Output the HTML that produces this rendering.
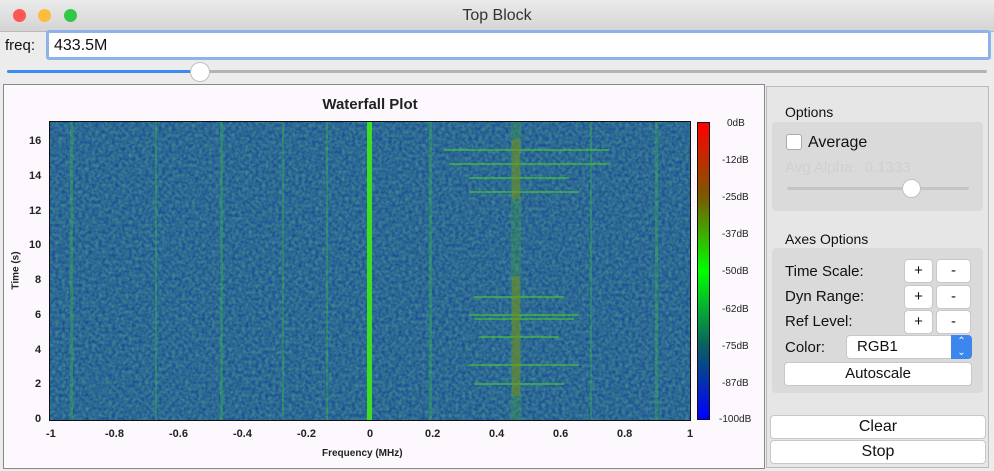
<!DOCTYPE html>
<html><head><meta charset="utf-8"><style>
*{margin:0;padding:0;box-sizing:border-box}
body{width:994px;height:471px;background:#ececec;font-family:"Liberation Sans",sans-serif;position:relative;overflow:hidden}
.a{position:absolute}
.btn{position:absolute;background:#fff;border:1px solid #c8c8c8;border-radius:4px;text-align:center;font-size:15px;color:#111}
.lbl{position:absolute;font-size:15px;color:#111}
.t{position:absolute;font-size:11px;font-weight:bold;color:#222}
</style></head><body>
<div class="a" style="left:0;top:0;width:994px;height:32px;background:linear-gradient(#ebebeb,#d4d4d4);border-bottom:1px solid #b8b8b8"></div>
<div class="a" style="left:13px;top:9px;width:13px;height:13px;border-radius:50%;background:#fc5753"></div>
<div class="a" style="left:38px;top:9px;width:13px;height:13px;border-radius:50%;background:#fdbc40"></div>
<div class="a" style="left:64px;top:9px;width:13px;height:13px;border-radius:50%;background:#33c748"></div>
<div class="a" style="left:0;top:7px;width:994px;text-align:center;font-size:16px;color:#333">Top Block</div>
<div class="lbl" style="left:5px;top:37px">freq:</div>
<div class="a" style="left:46px;top:30px;width:945px;height:30px;border:3px solid #8db4ea;border-radius:3px;background:#fff"></div>
<div class="lbl" style="left:54px;top:37px;font-size:16px">433.5M</div>
<div class="a" style="left:7px;top:70px;width:193px;height:3px;background:#3b8bf0;border-radius:2px"></div>
<div class="a" style="left:200px;top:70px;width:787px;height:3px;background:#b3b3b3;border-radius:2px"></div>
<div class="a" style="left:190px;top:62px;width:20px;height:20px;border-radius:50%;background:#fff;border:1px solid #c0c0c0"></div>
<div class="a" style="left:3px;top:84px;width:762px;height:385px;background:#fcf8fd;border:1px solid #888"></div>
<div class="a" style="left:0;top:96px;width:740px;text-align:center;font-size:15px;font-weight:bold;color:#222">Waterfall Plot</div>
<svg class="a" style="left:49px;top:121px" width="642" height="300">
<defs><filter id="n"><feTurbulence type="fractalNoise" baseFrequency="0.3" numOctaves="2" seed="3"/><feColorMatrix values="0 0 0 0 0.1  0 0 0 0 0.45  0 0 0 0 0.25  0 0 0 -1.2 1.0"/></filter></defs>
<rect x="1" y="1" width="640" height="298" fill="#1a4a98"/>
<rect x="1" y="1" width="640" height="298" filter="url(#n)" opacity="0.75"/>
<g fill="#3ac040" opacity="0.35">
<rect x="21" y="1" width="3" height="298"/><rect x="106" y="1" width="2" height="298"/><rect x="171" y="1" width="3" height="298"/><rect x="233" y="1" width="2" height="298"/><rect x="277" y="1" width="2" height="298"/><rect x="380" y="1" width="3" height="298"/><rect x="541" y="1" width="2" height="298"/><rect x="606" y="1" width="3" height="298"/>
</g>
<rect x="318" y="1" width="5" height="298" fill="#3de020"/>
<rect x="462" y="1" width="10" height="298" fill="#3ea040" opacity="0.35"/>
<g fill="#48c830" opacity="0.6">
<rect x="395" y="28" width="165" height="2"/><rect x="400" y="42" width="160" height="2"/><rect x="420" y="56" width="100" height="2"/><rect x="420" y="70" width="110" height="2"/>
<rect x="425" y="175" width="90" height="2"/><rect x="420" y="193" width="110" height="2"/><rect x="425" y="197" width="100" height="2"/><rect x="430" y="215" width="80" height="2"/><rect x="420" y="243" width="110" height="2"/><rect x="425" y="262" width="90" height="2"/>
</g>
<g fill="#7a8a20" opacity="0.5"><rect x="463" y="18" width="8" height="60"/><rect x="463" y="155" width="8" height="120"/></g>
<rect x="0.5" y="0.5" width="641" height="299" fill="none" stroke="#111"/>
</svg>
<div class="a" style="left:697px;top:122px;width:13px;height:298px;border:1px solid #111;background:linear-gradient(#ff0000,#7a5a00 25%,#00ff00 50%,#0a6060 75%,#0000ff)"></div>
<div class="t" style="left:727px;top:118px;font-weight:normal;font-size:10px">0dB</div>
<div class="t" style="left:722px;top:155px;font-weight:normal;font-size:10px">-12dB</div>
<div class="t" style="left:722px;top:192px;font-weight:normal;font-size:10px">-25dB</div>
<div class="t" style="left:722px;top:229px;font-weight:normal;font-size:10px">-37dB</div>
<div class="t" style="left:722px;top:266px;font-weight:normal;font-size:10px">-50dB</div>
<div class="t" style="left:722px;top:304px;font-weight:normal;font-size:10px">-62dB</div>
<div class="t" style="left:722px;top:341px;font-weight:normal;font-size:10px">-75dB</div>
<div class="t" style="left:722px;top:378px;font-weight:normal;font-size:10px">-87dB</div>
<div class="t" style="left:719px;top:414px;font-weight:normal;font-size:10px">-100dB</div>
<div class="t" style="left:29px;top:135px">16</div><div class="t" style="left:29px;top:170px">14</div><div class="t" style="left:29px;top:205px">12</div><div class="t" style="left:29px;top:239px">10</div><div class="t" style="left:35px;top:274px">8</div><div class="t" style="left:35px;top:309px">6</div><div class="t" style="left:35px;top:344px">4</div><div class="t" style="left:35px;top:378px">2</div><div class="t" style="left:35px;top:413px">0</div>
<div class="t" style="left:46px;top:428px">-1</div><div class="t" style="left:105px;top:428px">-0.8</div><div class="t" style="left:169px;top:428px">-0.6</div><div class="t" style="left:233px;top:428px">-0.4</div><div class="t" style="left:297px;top:428px">-0.2</div><div class="t" style="left:367px;top:428px">0</div><div class="t" style="left:425px;top:428px">0.2</div><div class="t" style="left:489px;top:428px">0.4</div><div class="t" style="left:553px;top:428px">0.6</div><div class="t" style="left:617px;top:428px">0.8</div><div class="t" style="left:687px;top:428px">1</div>
<div class="t" style="left:322px;top:448px;font-size:10px">Frequency (MHz)</div>
<div class="t" style="left:-3px;top:265px;font-size:10px;transform:rotate(-90deg)">Time (s)</div>
<div class="a" style="left:766px;top:86px;width:223px;height:382px;background:#e6e6e6;border:1px solid #bbb"></div>
<div class="lbl" style="left:785px;top:104px;font-size:14px">Options</div>
<div class="a" style="left:772px;top:122px;width:211px;height:89px;background:#dadada;border-radius:4px"></div>
<div class="a" style="left:786px;top:134px;width:16px;height:16px;background:#fff;border:1px solid #aaa;border-radius:3px"></div>
<div class="lbl" style="left:808px;top:134px;font-size:16px">Average</div>
<div class="lbl" style="left:785px;top:159px;color:#d0d0d0">Avg Alpha:&nbsp; 0.1333</div>
<div class="a" style="left:787px;top:187px;width:182px;height:3px;background:#c4c4c4;border-radius:2px"></div>
<div class="a" style="left:902px;top:179px;width:19px;height:19px;border-radius:50%;background:#fff;border:1px solid #c0c0c0"></div>
<div class="lbl" style="left:785px;top:231px;font-size:14px">Axes Options</div>
<div class="a" style="left:772px;top:248px;width:211px;height:145px;background:#dadada;border-radius:4px"></div>
<div class="lbl" style="left:785px;top:263px">Time Scale:</div>
<div class="lbl" style="left:785px;top:288px">Dyn Range:</div>
<div class="lbl" style="left:785px;top:313px">Ref Level:</div>
<div class="lbl" style="left:785px;top:339px">Color:</div>
<div class="btn" style="left:904px;top:259px;width:29px;height:24px;line-height:22px">+</div><div class="btn" style="left:936px;top:259px;width:35px;height:24px;line-height:22px">-</div>
<div class="btn" style="left:904px;top:285px;width:29px;height:24px;line-height:22px">+</div><div class="btn" style="left:936px;top:285px;width:35px;height:24px;line-height:22px">-</div>
<div class="btn" style="left:904px;top:310px;width:29px;height:24px;line-height:22px">+</div><div class="btn" style="left:936px;top:310px;width:35px;height:24px;line-height:22px">-</div>
<div class="btn" style="left:846px;top:335px;width:126px;height:24px;text-align:left;padding-left:10px;line-height:22px">RGB1</div>
<div class="a" style="left:951px;top:335px;width:21px;height:24px;background:#3d86ee;border-radius:0 4px 4px 0;color:#fff;font-size:10px;text-align:center;line-height:11px;padding-top:1px">⌃<br>⌄</div>
<div class="btn" style="left:784px;top:362px;width:188px;height:24px;line-height:22px">Autoscale</div>
<div class="btn" style="left:770px;top:415px;width:216px;height:24px;line-height:22px;font-size:16px">Clear</div>
<div class="btn" style="left:770px;top:440px;width:216px;height:24px;line-height:22px;font-size:16px">Stop</div>
</body></html>
